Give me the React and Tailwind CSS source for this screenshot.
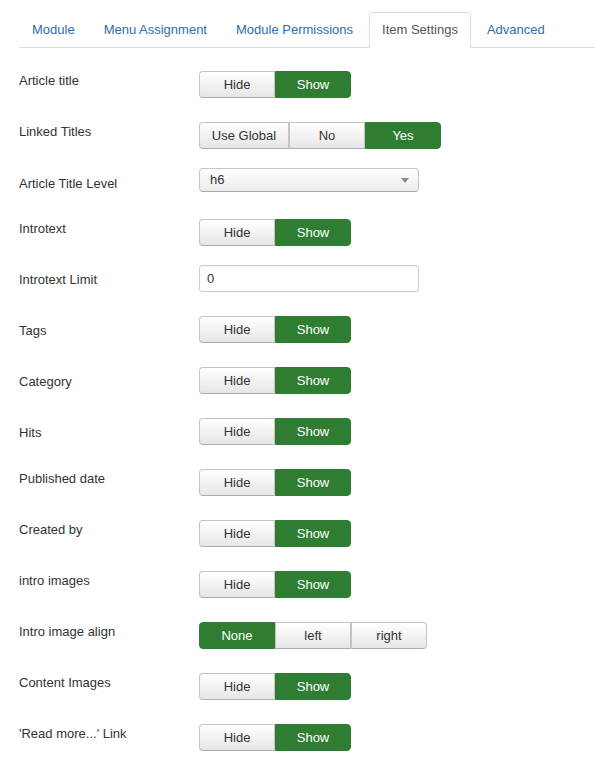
import React from 'react'

const tabs = ['Module', 'Menu Assignment', 'Module Permissions', 'Item Settings', 'Advanced']

// h = distance to next row, pt = label offset from control top
const rows = [
    { label: 'Article title', type: 'group', h: 51 },
    { label: 'Linked Titles', type: 'group', opts: ['Use Global', 'No', 'Yes'], widths: [90, 76, 76], active: 2, h: 46 },
    { label: 'Article Title Level', type: 'select', value: 'h6', h: 51, pt: 6 },
    { label: 'Introtext', type: 'group', h: 46 },
    { label: 'Introtext Limit', type: 'input', value: '0', h: 51, pt: 5 },
    { label: 'Tags', type: 'group', h: 51, pt: 5 },
    { label: 'Category', type: 'group', h: 51, pt: 5 },
    { label: 'Hits', type: 'group', h: 51, pt: 5 },
    { label: 'Published date', type: 'group', h: 51 },
    { label: 'Created by', type: 'group', h: 51 },
    { label: 'intro images', type: 'group', h: 51 },
    { label: 'Intro image align', type: 'group', opts: ['None', 'left', 'right'], active: 0, h: 51 },
    { label: 'Content Images', type: 'group', h: 51 },
    { label: "'Read more...' Link", type: 'group', h: 51 },
]

const BtnGroup = ({ opts = ['Hide', 'Show'], widths, active = 1 }) => (
    <div className="flex">
        {opts.map((o, i) => {
            const on = i === active
            const first = i === 0
            const last = i === opts.length - 1
            return (
                <div
                    key={o}
                    style={{ width: widths ? widths[i] : 76 }}
                    className={
                        'h-[27px] flex items-center justify-center text-[13px] border ' +
                        (first ? 'rounded-l-[4px] ' : '') +
                        (last ? 'rounded-r-[4px] ' : '') +
                        (on
                            ? 'bg-[#2f7d32] border-[#2f7d32] text-white'
                            : 'bg-gradient-to-b from-white to-[#e6e6e6] border-[#c4c4c4] border-b-[#adadad] text-[#333]')
                    }
                >
                    {o}
                </div>
            )
        })}
    </div>
)

const Select = ({ value }) => (
    <div className="w-[220px] h-[24px] flex items-center justify-between pl-[10px] pr-[9px] rounded-[4px] border border-[#c6c6c6] border-b-[#aaa] bg-gradient-to-b from-white to-[#ececec] text-[13px] text-[#333]">
        <span>{value}</span>
        <svg width="8" height="5" viewBox="0 0 8 5">
            <path d="M0 0 L8 0 L4 5 Z" fill="#8a8a8a" />
        </svg>
    </div>
)

const Input = ({ value }) => (
    <div className="w-[220px] h-[27px] flex items-center px-[7px] rounded-[3px] border border-[#ccc] bg-white text-[13px] text-[#333] shadow-[inset_0_1px_1px_rgba(0,0,0,0.05)]">
        {value}
    </div>
)

export default function App() {
    return (
        <div className="w-[595px] h-[782px] bg-white pl-[19px] pt-[12px] font-['Liberation_Sans',Arial,sans-serif] text-[13px] text-[#333] overflow-hidden">
            {/* tabs */}
            <ul className="flex border-b border-[#ddd]">
                {tabs.map((t) => {
                    const on = t === 'Item Settings'
                    return (
                        <li key={t} className="-mb-px mr-[3px]">
                            <div
                                className={
                                    'px-[12px] py-[8px] leading-[18px] border rounded-t-[4px] ' +
                                    (on
                                        ? 'bg-white border-[#ddd] border-b-white text-[#555]'
                                        : 'border-transparent text-[#2f6cae]')
                                }
                            >
                                {t}
                            </div>
                        </li>
                    )
                })}
            </ul>

            {/* fields */}
            <div className="mt-[23px] flex flex-col">
                {rows.map((r) => (
                    <div key={r.label} className="flex items-start" style={{ height: r.h }}>
                        <div className="w-[180px] leading-[18px]" style={{ paddingTop: (r.pt || 0) + 1 }}>
                            {r.label}
                        </div>
                        {r.type === 'group' && <BtnGroup opts={r.opts} widths={r.widths} active={r.active} />}
                        {r.type === 'select' && <Select value={r.value} />}
                        {r.type === 'input' && <Input value={r.value} />}
                    </div>
                ))}
            </div>
        </div>
    )
}
